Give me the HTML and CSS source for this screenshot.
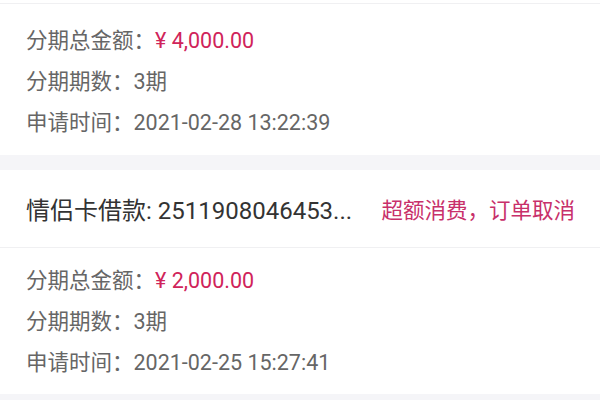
FILE: index.html
```html
<!DOCTYPE html>
<html lang="zh">
<head>
<meta charset="utf-8">
<link rel="stylesheet" href="styles.css">
</head>
<body>
<div class="page">
  <section class="card">
    <div class="top-space"></div>
    <div class="details first">
      <div class="row">分期总金额：<span class="amount">¥ 4,000.00</span></div>
      <div class="row">分期期数：3期</div>
      <div class="row">申请时间：2021-02-28 13:22:39</div>
    </div>
  </section>
  <div class="gap"></div>
  <section class="card">
    <div class="header">
      <span class="title">情侣卡借款: 2511908046453...</span>
      <span class="status">超额消费，订单取消</span>
    </div>
    <div class="details">
      <div class="row">分期总金额：<span class="amount">¥ 2,000.00</span></div>
      <div class="row">分期期数：3期</div>
      <div class="row">申请时间：2021-02-25 15:27:41</div>
    </div>
  </section>
  <div class="gap"></div>
</div>
</body>
</html>
```
FILE: styles.css
```css
html, body {
  margin: 0;
  padding: 0;
  background: #f5f5f8;
}
.page {
  width: 600px;
  height: 400px;
  overflow: hidden;
  font-family: Roboto, "Noto Sans CJK SC", sans-serif;
}
.card {
  background: #ffffff;
}
.top-space {
  height: 3px;
  border-bottom: 1px solid #f0f0f2;
}
.details {
  padding: 12px 26px 11px;
}
.details.first {
  padding: 16px 26px 12px;
}
.row {
  font-size: 21.5px;
  line-height: 41px;
  color: #666666;
  white-space: nowrap;
}
.amount {
  color: #d0245a;
}
.gap {
  height: 15px;
  background: #f5f5f8;
}
.header {
  height: 77px;
  padding: 0 25px 0 26px;
  display: flex;
  align-items: center;
  justify-content: space-between;
  border-bottom: 1px solid #f0f0f2;
  white-space: nowrap;
}
.title {
  font-size: 24px;
  color: #333333;
}
.status {
  font-size: 21.5px;
  color: #c8306a;
}
```
